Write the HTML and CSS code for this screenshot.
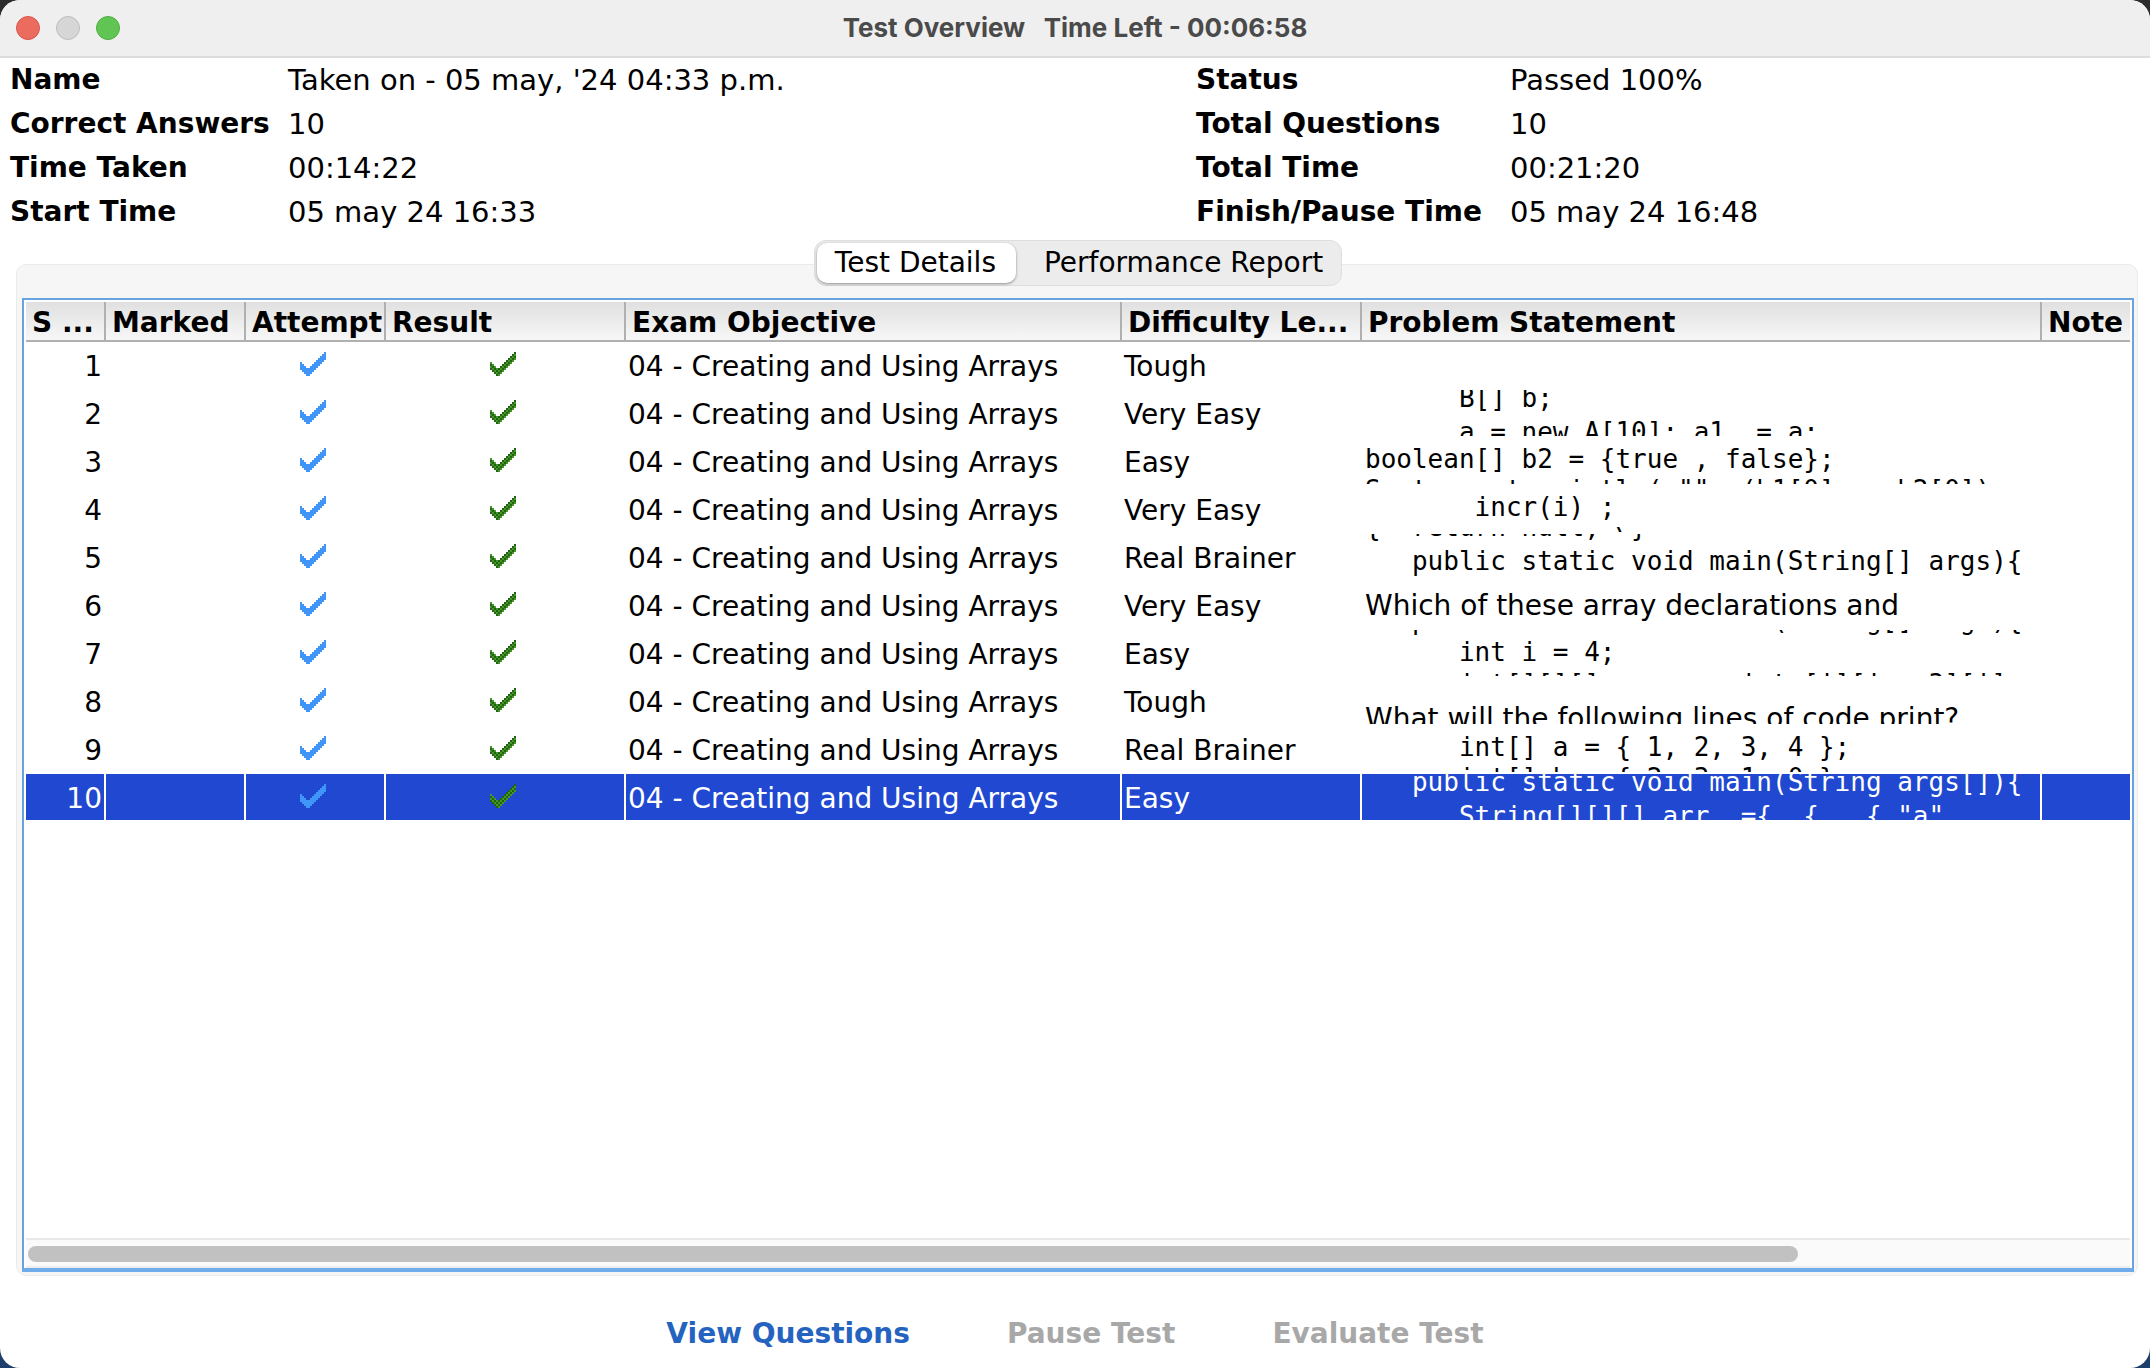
FILE: index.html
```html
<!DOCTYPE html>
<html lang="en">
<head>
<meta charset="utf-8">
<title>Test Overview</title>
<link rel="stylesheet" href="styles.css">
</head>
<body>
<svg class="defs" width="0" height="0" aria-hidden="true">
  <defs>
    <pattern id="weave" width="4" height="4" patternUnits="userSpaceOnUse">
      <rect width="4" height="4" fill="#46962c"/>
      <rect width="2" height="2" fill="#226310"/>
      <rect x="2" y="2" width="2" height="2" fill="#226310"/>
    </pattern>
    <symbol id="tick" viewBox="0 0 26 24">
      <path shape-rendering="crispEdges" d="M0 10h2v2h2v2h2v2h4v-2h2v-2h2v-2h2v-2h2v-2h2v-2h2v-2h2v-2h2v8h-2v2h-2v2h-2v2h-2v2h-2v2h-2v2h-2v2h-2v2h-4v-2h-2v-2h-2v-2h-2z"/>
    </symbol>
  </defs>
</svg>
<div class="window">
  <header class="titlebar">
    <div class="lights">
      <button class="light close" aria-label="Close"></button>
      <button class="light minimize" aria-label="Minimize" disabled></button>
      <button class="light zoom" aria-label="Zoom"></button>
    </div>
    <h1 class="title">Test Overview &nbsp; Time Left - 00:06:58</h1>
  </header>

  <section class="summary">
    <dl class="facts facts-left">
      <dt>Name</dt><dd>Taken on - 05 may, '24 04:33 p.m.</dd>
      <dt>Correct Answers</dt><dd>10</dd>
      <dt>Time Taken</dt><dd>00:14:22</dd>
      <dt>Start Time</dt><dd>05 may 24 16:33</dd>
    </dl>
    <dl class="facts facts-right">
      <dt>Status</dt><dd>Passed 100%</dd>
      <dt>Total Questions</dt><dd>10</dd>
      <dt>Total Time</dt><dd>00:21:20</dd>
      <dt>Finish/Pause Time</dt><dd>05 may 24 16:48</dd>
    </dl>
  </section>

  <main class="panel">
    <div class="tabs" role="tablist">
      <button class="tab active" role="tab" aria-selected="true">Test Details</button>
      <button class="tab" role="tab" aria-selected="false">Performance Report</button>
    </div>
    <div class="frame">
      <div class="viewport">
        <table class="grid">
          <colgroup>
            <col class="c-serial"><col class="c-flag"><col class="c-flag"><col class="c-medium"><col class="c-objective"><col class="c-medium"><col class="c-problem"><col>
          </colgroup>
          <thead>
            <tr><th>S ...</th><th>Marked</th><th>Attempt</th><th>Result</th><th>Exam Objective</th><th>Difficulty Le...</th><th>Problem Statement</th><th>Note</th></tr>
          </thead>
          <tbody>
            <tr><td class="num">1</td><td></td><td class="mark"><svg class="tick blue"><use href="#tick"/></svg></td><td class="mark"><svg class="tick green"><use href="#tick"/></svg></td><td>04 - Creating and Using Arrays</td><td>Tough</td><td></td><td></td></tr>
            <tr><td class="num">2</td><td></td><td class="mark"><svg class="tick blue"><use href="#tick"/></svg></td><td class="mark"><svg class="tick green"><use href="#tick"/></svg></td><td>04 - Creating and Using Arrays</td><td>Very Easy</td><td class="problem"><pre class="snippet up loose">      B[] b;
      a = new A[10]; a1  = a;</pre></td><td></td></tr>
            <tr><td class="num">3</td><td></td><td class="mark"><svg class="tick blue"><use href="#tick"/></svg></td><td class="mark"><svg class="tick green"><use href="#tick"/></svg></td><td>04 - Creating and Using Arrays</td><td>Easy</td><td class="problem"><pre class="snippet">boolean[] b2 = {true , false};
System.out.println( ""+ (b1[0] == b2[0])</pre></td><td></td></tr>
            <tr><td class="num">4</td><td></td><td class="mark"><svg class="tick blue"><use href="#tick"/></svg></td><td class="mark"><svg class="tick green"><use href="#tick"/></svg></td><td>04 - Creating and Using Arrays</td><td>Very Easy</td><td class="problem"><pre class="snippet">       incr(i) ;
                \</pre></td><td></td></tr>
            <tr><td class="num">5</td><td></td><td class="mark"><svg class="tick blue"><use href="#tick"/></svg></td><td class="mark"><svg class="tick green"><use href="#tick"/></svg></td><td>04 - Creating and Using Arrays</td><td>Real Brainer</td><td class="problem"><pre class="snippet scrolled loose">{  return null;  }
   public static void main(String[] args){</pre></td><td></td></tr>
            <tr><td class="num">6</td><td></td><td class="mark"><svg class="tick blue"><use href="#tick"/></svg></td><td class="mark"><svg class="tick green"><use href="#tick"/></svg></td><td>04 - Creating and Using Arrays</td><td>Very Easy</td><td class="problem"><p class="prose">Which of these array declarations and</p></td><td></td></tr>
            <tr><td class="num">7</td><td></td><td class="mark"><svg class="tick blue"><use href="#tick"/></svg></td><td class="mark"><svg class="tick green"><use href="#tick"/></svg></td><td>04 - Creating and Using Arrays</td><td>Easy</td><td class="problem"><pre class="snippet spaced">   public static void main(String[] args){
      int i = 4;
      int[][][] arr  =  int [i][i = 3][i];</pre></td><td></td></tr>
            <tr><td class="num">8</td><td></td><td class="mark"><svg class="tick blue"><use href="#tick"/></svg></td><td class="mark"><svg class="tick green"><use href="#tick"/></svg></td><td>04 - Creating and Using Arrays</td><td>Tough</td><td class="problem"><p class="prose low">What will the following lines of code print?</p></td><td></td></tr>
            <tr><td class="num">9</td><td></td><td class="mark"><svg class="tick blue"><use href="#tick"/></svg></td><td class="mark"><svg class="tick green"><use href="#tick"/></svg></td><td>04 - Creating and Using Arrays</td><td>Real Brainer</td><td class="problem"><pre class="snippet">      int[] a = { 1, 2, 3, 4 };
      int[] b = { 2, 3, 1, 0 };</pre></td><td></td></tr>
            <tr class="selected"><td class="num">10</td><td></td><td class="mark"><svg class="tick blue"><use href="#tick"/></svg></td><td class="mark"><svg class="tick green"><use href="#tick"/></svg></td><td>04 - Creating and Using Arrays</td><td>Easy</td><td class="problem"><pre class="snippet up loose">   public static void main(String args[]){
      String[][][] arr  ={  {   { "a"</pre></td><td></td></tr>
          </tbody>
        </table>
      </div>
      <div class="scrollbar"><div class="thumb"></div></div>
    </div>
  </main>

  <footer class="actions">
    <button class="action">View Questions</button>
    <button class="action" disabled>Pause Test</button>
    <button class="action" disabled>Evaluate Test</button>
  </footer>
</div>
</body>
</html>
```
FILE: styles.css
```css
* { box-sizing: border-box; }

body {
  margin: 0;
  background: linear-gradient(#2b2b2b, #2b2b2b 50%, #1c3f6b 50%);
  color: #000;
  font: 28px/44px "DejaVu Sans", Verdana, sans-serif;
}

button {
  margin: 0;
  padding: 0;
  border: 0;
  background: none;
  color: inherit;
  font: inherit;
}

.defs { position: absolute; }

.window {
  display: flex;
  flex-direction: column;
  min-height: 100vh;
  overflow: hidden;
  border-radius: 20px;
  background: #fff;
}

/* Title bar */
.titlebar {
  display: grid;
  grid-template-columns: 1fr auto 1fr;
  align-items: center;
  height: 58px;
  padding: 0 16px;
  border-bottom: 2px solid #dcdcdc;
  background: #efefef;
}

.lights { display: flex; gap: 16px; }

.light {
  width: 24px;
  height: 24px;
  border: 1px solid #d8564b;
  border-radius: 50%;
  background: #ec6b5f;
}

.light.minimize { border-color: #bdbdbd; background: #d6d6d6; }
.light.zoom { border-color: #50ad41; background: #61c554; }

.title {
  margin: 0;
  color: #4a4a4a;
  font: 700 26px/48px Inter, sans-serif;
}

/* Summary */
.summary {
  display: grid;
  grid-template-columns: 1186fr 944fr;
  padding: 0 10px;
}

.facts {
  display: grid;
  align-content: start;
  margin: 0;
}

.facts-left { grid-template-columns: 278px 1fr; }
.facts-right { grid-template-columns: 314px 1fr; }
.facts dt { font-weight: bold; }
.facts dd { margin: 0; font-size: 29px; }

/* Tabbed panel */
.panel {
  display: flex;
  flex: 1;
  flex-direction: column;
  margin: 30px 12px 0 16px;
  padding: 0 3px 3px 5px;
  border: 1px solid #ebebeb;
  border-radius: 10px;
  background: #f6f6f6;
}

.tabs {
  display: flex;
  align-self: center;
  height: 46px;
  margin: -25px 0 12px;
  padding: 2px;
  border: 1px solid #dedede;
  border-radius: 12px;
  background: #ececec;
}

.tab {
  padding: 0 16px 0 28px;
  line-height: 40px;
}

.tab.active {
  padding: 0 20px 0 18px;
  border-radius: 10px;
  background: #fff;
  box-shadow: 0 1px 3px #00000066;
}

.frame {
  display: flex;
  flex: 1;
  flex-direction: column;
  padding: 2px 2px 0;
  border: 2px solid #66a3e0;
  border-bottom: 4px solid #70abea;
  background: #fff;
}

.viewport { flex: 1; overflow: hidden; }

/* Question grid */
.grid {
  width: 100%;
  table-layout: fixed;
  border-collapse: separate;
  border-spacing: 0;
}

.c-serial { width: 80px; }
.c-flag { width: 140px; }
.c-medium { width: 240px; }
.c-objective { width: 496px; }
.c-problem { width: 680px; }

th {
  height: 40px;
  padding: 4px 0 0 6px;
  overflow: hidden;
  border-right: 2px solid #b0b0b0;
  border-bottom: 2px solid #b0b0b0;
  background: linear-gradient(#e0e0e0, #f7f7f7);
  line-height: 34px;
  text-align: left;
  white-space: nowrap;
}

td {
  height: 48px;
  padding: 4px 2px 0;
  border-right: 2px solid #fff;
  border-bottom: 2px solid #fff;
  line-height: 42px;
  white-space: nowrap;
}

th:last-child, td:last-child { border-right: 0; }

.num { text-align: right; }
.mark { padding: 0 4px 2px 0; }

.tick { display: block; width: 26px; height: 24px; margin: 0 auto; }
.tick.blue { fill: #4096f8; }
.tick.green { fill: url(#weave); }

.selected { background: #2048d0; color: #fff; }

/* Each problem cell is a small window on a longer text */
.problem { padding: 0 0 0 3px; }

.snippet, .prose {
  height: 46px;
  margin: 0;
  overflow: hidden;
}

.snippet {
  font: 26px/31px "DejaVu Sans Mono", monospace;
}

.snippet::before { content: ""; display: block; margin-top: 6px; }
.snippet.loose { line-height: 34px; }
.snippet.spaced { line-height: 32px; }
.snippet.up::before { margin-top: -9px; }
.snippet.scrolled::before { margin-top: -24px; }
.snippet.spaced::before { margin-top: -26px; }

.prose { line-height: 48px; }
.prose.low { line-height: 82px; }

/* Horizontal scroll bar */
.scrollbar {
  height: 30px;
  padding: 6px 2px;
  border-top: 2px solid #e8e8e8;
  border-bottom: 2px solid #ededed;
  background: #fafafa;
}

.thumb {
  width: 84.3%;
  height: 16px;
  border-radius: 8px;
  background: #c1c1c1;
}

/* Footer buttons */
.actions {
  display: flex;
  justify-content: center;
  gap: 97px;
  padding: 36px 0 12px;
}

.action { color: #2563c0; font-weight: bold; }
.action:disabled { color: #a8a8a8; }
```
